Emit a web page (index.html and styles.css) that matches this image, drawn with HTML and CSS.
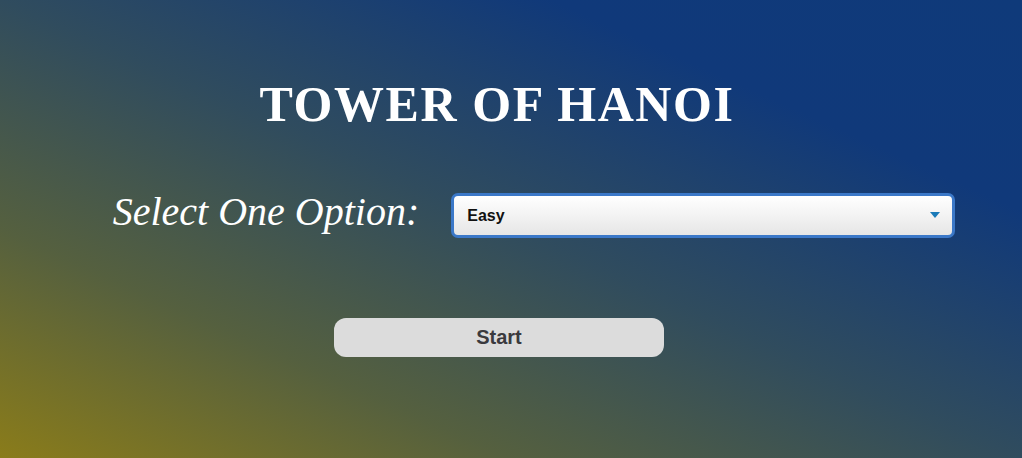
FILE: index.html
```html
<!DOCTYPE html>
<html>
<head>
<meta charset="utf-8">
<link rel="stylesheet" href="styles.css">
</head>
<body>
<main class="page">
  <h1 class="title">TOWER OF HANOI</h1>
  <div class="option-row">
    <label class="option-label" for="level">Select One Option:</label>
    <div class="select-wrap">
      <select id="level" class="level-select">
        <option>Easy</option>
        <option>Medium</option>
        <option>Hard</option>
      </select>
      <span class="select-arrow"></span>
    </div>
  </div>
  <div class="start-row">
    <button class="start-btn">Start</button>
  </div>
</main>
</body>
</html>
```
FILE: styles.css
```css
html, body {
  margin: 0;
  height: 100%;
}
body {
  background: linear-gradient(to top right, #8a7c1a 0%, #55603f 25%, #304c5e 50%, #10397a 77%, #0f3a7a 100%);
  font-family: "Liberation Serif", serif;
  color: #fff;
  overflow: hidden;
}
.page {
  display: flex;
  flex-direction: column;
  align-items: center;
  padding-top: 72px;
}
.title {
  margin: 0;
  font-family: "Liberation Serif", serif;
  font-weight: bold;
  font-size: 50px;
  letter-spacing: 1.6px;
  line-height: 64px;
  margin-right: 28px;
}
.option-row {
  display: flex;
  align-items: center;
  margin-top: 57px;
  margin-left: 46px;
  gap: 32px;
}
.option-label {
  font-style: italic;
  font-size: 40px;
  color: #fff;
  margin-top: -8px;
}
.select-wrap {
  position: relative;
  width: 504px;
  height: 45px;
}
.level-select {
  appearance: none;
  -webkit-appearance: none;
  width: 100%;
  height: 100%;
  box-sizing: border-box;
  border: 3px solid #3b78c8;
  border-radius: 7px;
  background: linear-gradient(#ffffff, #e6e6e6);
  font-family: "Liberation Sans", Arial, sans-serif;
  font-weight: bold;
  font-size: 16px;
  color: #111;
  padding: 0 0 0 13px;
  outline: none;
}
.select-arrow {
  position: absolute;
  right: 15px;
  top: 19px;
  width: 0;
  height: 0;
  border-left: 5px solid transparent;
  border-right: 5px solid transparent;
  border-top: 6px solid #1a7ab8;
  pointer-events: none;
}
.start-row {
  margin-top: 80px;
  margin-right: 24px;
}
.start-btn {
  width: 330px;
  height: 39px;
  border: none;
  border-radius: 12px;
  background: #dcdcdc;
  font-family: "Liberation Sans", Arial, sans-serif;
  font-weight: bold;
  font-size: 20px;
  color: #3a3a3e;
}
```
